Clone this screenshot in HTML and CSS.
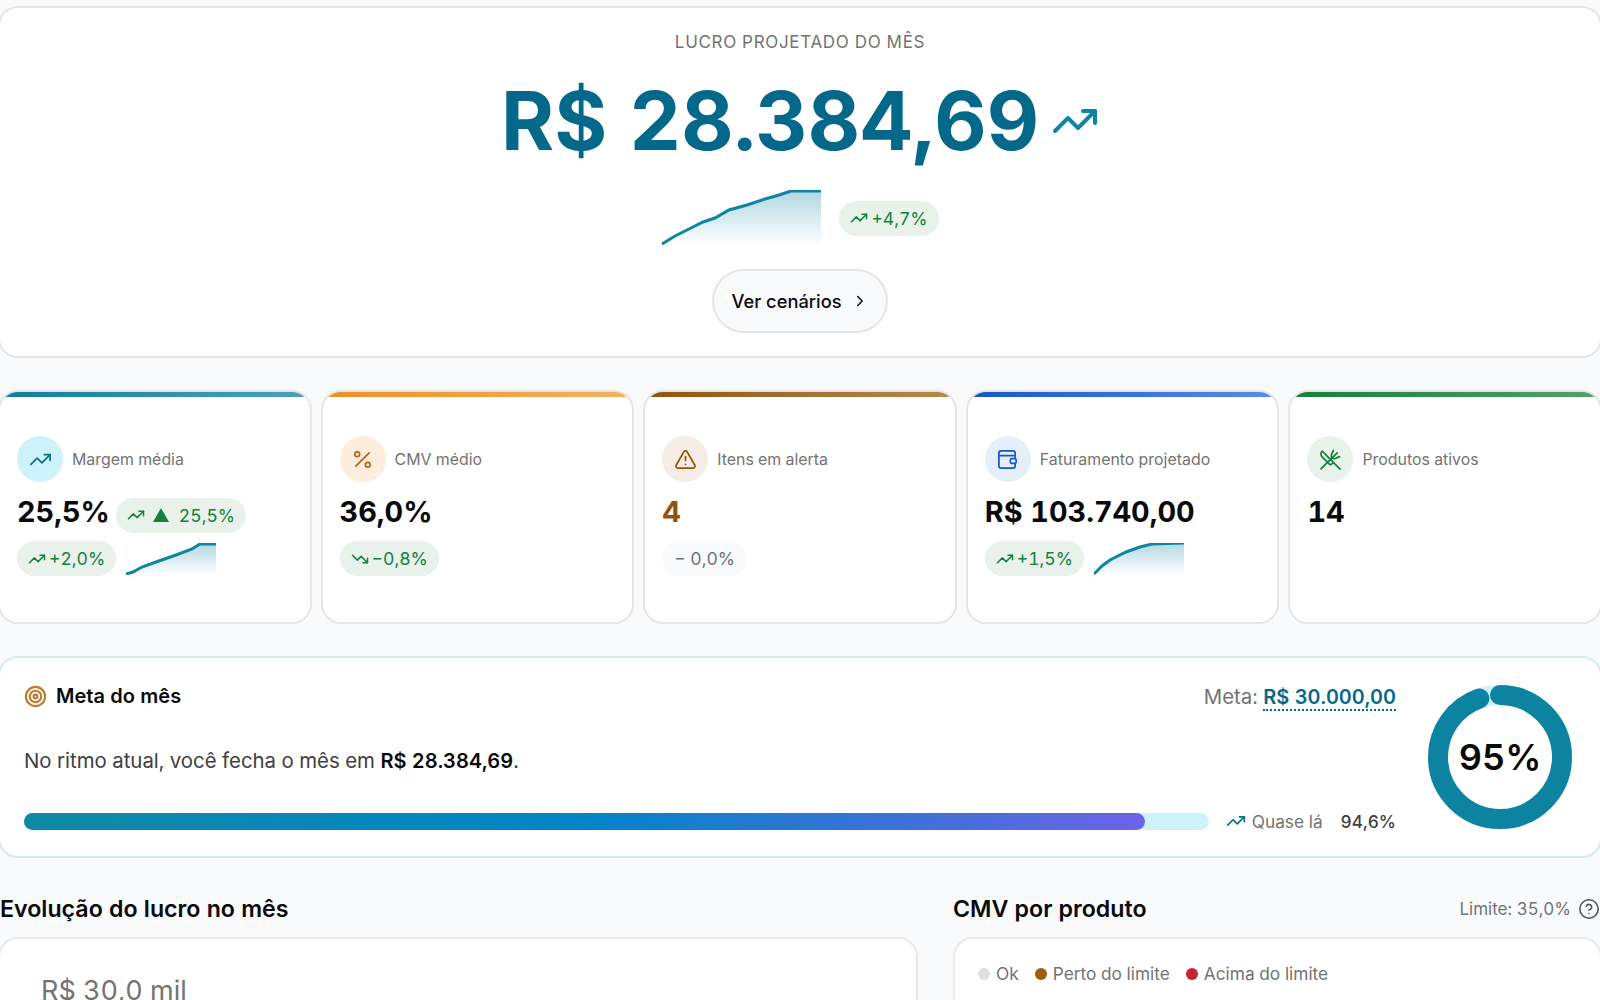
FILE: index.html
```html
<!doctype html>
<html lang="pt-BR">
<head>
    <meta charset="utf-8">
    <title>Lucro projetado</title>
    <link rel="stylesheet" href="styles.css">
</head>
<body>
<svg class="defs" width="0" height="0">
    <defs>
        <symbol id="i-up" viewBox="0 0 24 24"><polyline points="22 7 13.5 15.5 8.5 10.5 2 17"/><polyline points="16 7 22 7 22 13"/></symbol>
        <symbol id="i-down" viewBox="0 0 24 24"><polyline points="22 17 13.5 8.5 8.5 13.5 2 7"/><polyline points="16 17 22 17 22 11"/></symbol>
        <linearGradient id="spark-fill" x1="0" y1="0" x2="0" y2="1">
            <stop offset="0" stop-color="#0e86a3" stop-opacity=".32"/>
            <stop offset="1" stop-color="#0e86a3" stop-opacity="0"/>
        </linearGradient>
    </defs>
</svg>
<div class="page">
    <section class="hero">
        <div class="hero-label">LUCRO PROJETADO DO MÊS</div>
        <div class="hero-value">
            <span>R$ 28.384,69</span>
            <svg class="ico hero-ico"><use href="#i-up"/></svg>
        </div>
        <div class="hero-trend">
            <svg class="spark-big" viewBox="0 0 160 56">
                <path class="spark-area" d="M1 54L14 46L32 37L42 32L54 28L68 20L86 15L104 9L118 5L130 1L160 1V56H1Z"/>
                <path class="spark-line" d="M1 54L14 46L32 37L42 32L54 28L68 20L86 15L104 9L118 5L130 1L160 1"/>
            </svg>
            <span class="chip"><svg class="ico chip-ico"><use href="#i-up"/></svg>+4,7%</span>
        </div>
        <button class="btn">Ver cenários
            <svg class="ico btn-ico" viewBox="0 0 24 24"><path d="m9 18 6-6-6-6"/></svg>
        </button>
    </section>

    <section class="kpis">
        <div class="kpi kpi-teal">
            <div class="kpi-head">
                <span class="kpi-icon"><svg class="ico"><use href="#i-up"/></svg></span>
                <span class="kpi-label">Margem média</span>
            </div>
            <div class="kpi-row">
                <span class="kpi-value">25,5%</span>
                <span class="chip"><svg class="ico chip-ico"><use href="#i-up"/></svg><span class="tri"></span>25,5%</span>
            </div>
            <div class="kpi-row">
                <span class="chip"><svg class="ico chip-ico"><use href="#i-up"/></svg>+2,0%</span>
                <svg class="spark" viewBox="0 0 90 32">
                    <path class="spark-area" d="M0 31L7 29L16 24L30 19L50 12L66 6L74 1L90 1V32H0Z"/>
                    <path class="spark-line" d="M0 31L7 29L16 24L30 19L50 12L66 6L74 1L90 1"/>
                </svg>
            </div>
        </div>
        <div class="kpi kpi-orange">
            <div class="kpi-head">
                <span class="kpi-icon">
                    <svg class="ico" viewBox="0 0 24 24"><line x1="19" y1="5" x2="5" y2="19"/><circle cx="6.5" cy="6.5" r="2.5"/><circle cx="17.5" cy="17.5" r="2.5"/></svg>
                </span>
                <span class="kpi-label">CMV médio</span>
            </div>
            <div class="kpi-row">
                <span class="kpi-value">36,0%</span>
            </div>
            <div class="kpi-row">
                <span class="chip"><svg class="ico chip-ico"><use href="#i-down"/></svg>−0,8%</span>
            </div>
        </div>
        <div class="kpi kpi-brown">
            <div class="kpi-head">
                <span class="kpi-icon">
                    <svg class="ico" viewBox="0 0 24 24"><path d="m21.73 18-8-14a2 2 0 0 0-3.48 0l-8 14A2 2 0 0 0 4 21h16a2 2 0 0 0 1.73-3"/><path d="M12 9v4"/><path d="M12 17h.01"/></svg>
                </span>
                <span class="kpi-label">Itens em alerta</span>
            </div>
            <div class="kpi-row">
                <span class="kpi-value">4</span>
            </div>
            <div class="kpi-row">
                <span class="chip chip-muted">− 0,0%</span>
            </div>
        </div>
        <div class="kpi kpi-blue">
            <div class="kpi-head">
                <span class="kpi-icon">
                    <svg class="ico" viewBox="0 0 24 24"><rect x="3" y="3" width="17" height="18" rx="2.5"/><path d="M3 8h17"/><rect x="15" y="11" width="6" height="5" rx="1.5" fill="#e5eefb"/></svg>
                </span>
                <span class="kpi-label">Faturamento projetado</span>
            </div>
            <div class="kpi-row">
                <span class="kpi-value">R$ 103.740,00</span>
            </div>
            <div class="kpi-row">
                <span class="chip"><svg class="ico chip-ico"><use href="#i-up"/></svg>+1,5%</span>
                <svg class="spark" viewBox="0 0 90 32">
                    <path class="spark-area" d="M0 31L8 23L16 17L32 9L46 4L58 1L90 0V32H0Z"/>
                    <path class="spark-line" d="M0 31L8 23L16 17L32 9L46 4L58 1L90 0"/>
                </svg>
            </div>
        </div>
        <div class="kpi kpi-green">
            <div class="kpi-head">
                <span class="kpi-icon">
                    <svg class="ico" viewBox="0 0 24 24"><path d="M15 15 3.3 3.3a4.2 4.2 0 0 0 0 6l7.3 7.3c.7.7 2 .7 2.8 0L15 15Zm0 0 7 7"/><path d="m2.1 21.8 12-12"/><path d="M15 2.500 13 7a3 3 0 0 0 .8 3.200 3 3 0 0 0 3.200.8l4.500-2"/><path d="m19 5-4.800 4.800"/></svg>
                </span>
                <span class="kpi-label">Produtos ativos</span>
            </div>
            <div class="kpi-row">
                <span class="kpi-value">14</span>
            </div>
        </div>
    </section>

    <section class="goal">
        <div class="goal-main">
            <div class="goal-top">
                <div class="goal-title">
                    <svg class="ico goal-ico" viewBox="0 0 24 24"><circle cx="12" cy="12" r="10"/><circle cx="12" cy="12" r="6"/><circle cx="12" cy="12" r="2"/></svg>
                    Meta do mês
                </div>
                <div class="goal-target">Meta: <span class="goal-amount">R$ 30.000,00</span></div>
            </div>
            <p class="goal-text">No ritmo atual, você fecha o mês em <strong>R$ 28.384,69</strong>.</p>
            <div class="goal-bar-row">
                <div class="bar"><div class="bar-fill" style="width:94.6%"></div></div>
                <span class="goal-status"><svg class="ico status-ico"><use href="#i-up"/></svg>Quase lá</span>
                <span class="goal-pct">94,6%</span>
            </div>
        </div>
        <div class="donut">
            <svg viewBox="0 0 144 144">
                <circle class="donut-track" cx="72" cy="72" r="62"/>
                <circle class="donut-arc" cx="72" cy="72" r="62" pathLength="100" stroke-dasharray="94.6 5.4" transform="rotate(-90 72 72)"/>
            </svg>
            <span class="donut-text">95%</span>
        </div>
    </section>

    <section class="charts">
        <div class="chart-col">
            <div class="chart-head"><h2>Evolução do lucro no mês</h2></div>
            <div class="panel"><div class="axis-label">R$ 30,0 mil</div></div>
        </div>
        <div class="chart-col">
            <div class="chart-head">
                <h2>CMV por produto</h2>
                <span class="limit">Limite: 35,0%
                    <svg class="ico help-ico" viewBox="0 0 24 24"><circle cx="12" cy="12" r="10"/><path d="M9.09 9a3 3 0 0 1 5.83 1c0 2-3 3-3 3"/><path d="M12 17h.01"/></svg>
                </span>
            </div>
            <div class="panel panel-legend">
                <div class="legend">
                    <span class="legend-item"><i class="dot dot-ok"></i>Ok</span>
                    <span class="legend-item"><i class="dot dot-near"></i>Perto do limite</span>
                    <span class="legend-item"><i class="dot dot-over"></i>Acima do limite</span>
                </div>
            </div>
        </div>
    </section>
</div>
</body>
</html>
```

FILE: styles.css
```css
*{
    margin:0;
    padding:0;
    box-sizing:border-box;
}
html,body{
    height:1000px;
    overflow:hidden;
}
body{
    background:#f8fafc;
    color:#0a0a0a;
    font-family:Inter,"Liberation Sans",sans-serif;
    font-variant-numeric:tabular-nums;
}
.defs{
    position:absolute;
}
.page{
    margin:0 -2px;
    padding-top:6px;
}
.ico{
    display:block;
    width:24px;
    height:24px;
    fill:none;
    stroke:currentColor;
    stroke-width:2;
    stroke-linecap:round;
    stroke-linejoin:round;
}

/* hero */
.hero{
    height:352px;
    background:#fff;
    border:2px solid #e5e5e5;
    border-radius:20px;
    padding-top:22px;
    display:flex;
    flex-direction:column;
    align-items:center;
}
.hero-label{
    font-size:17px;
    line-height:24px;
    letter-spacing:.68px;
    color:#737373;
}
.hero-value{
    display:flex;
    align-items:center;
    gap:12px;
    margin-top:19px;
    font-size:81px;
    line-height:96px;
    font-weight:700;
    color:#04688a;
}
.hero-ico{
    width:48px;
    height:48px;
    color:#0e86a3;
}
.hero-trend{
    display:flex;
    align-items:center;
    gap:18px;
    margin-top:21px;
}
.spark-big{
    width:160px;
    height:56px;
    display:block;
}
.spark{
    width:90px;
    height:32px;
    display:block;
}
.spark-area{
    fill:url(#spark-fill);
}
.spark-line{
    fill:none;
    stroke:#0e86a3;
    stroke-width:3;
}
.chip{
    display:inline-flex;
    align-items:center;
    gap:3px;
    height:35px;
    padding:0 11px;
    border-radius:18px;
    background:#e8f2ea;
    color:#15803d;
    font-size:17.6px;
    font-weight:400;
    white-space:nowrap;
}
.chip-ico{
    width:18px;
    height:18px;
}
.chip-muted{
    padding:0 12px;
    background:#f8fafc;
    color:#737373;
}
.tri{
    width:0;
    height:0;
    border-left:8px solid transparent;
    border-right:8px solid transparent;
    border-bottom:14px solid #15803d;
    margin:0 7px 0 5px;
}
.btn{
    display:flex;
    align-items:center;
    gap:9px;
    margin-top:23px;
    height:64px;
    padding:0 17px;
    border:2px solid #e5e5e5;
    border-radius:32px;
    background:#f8fafc;
    color:#0a0a0a;
    font:500 18.3px Inter,"Liberation Sans",sans-serif;
}
.btn-ico{
    width:18px;
    height:18px;
}

/* kpi cards */
.kpis{
    display:grid;
    grid-template-columns:repeat(5,1fr);
    gap:9px;
    margin-top:32px;
}
.kpi{
    height:234px;
    background:#fff;
    border:2px solid #e5e5e5;
    border-radius:20px;
    padding:44px 17px 0;
    overflow:hidden;
    position:relative;
}
.kpi:before{
    content:"";
    position:absolute;
    left:-2px;
    right:-2px;
    top:-2px;
    height:7px;
}
.kpi-teal:before{background:linear-gradient(90deg,#0e7f9c,#4ea3b8);}
.kpi-orange:before{background:linear-gradient(90deg,#ee8f22,#f6b25f);}
.kpi-brown:before{background:linear-gradient(90deg,#92540c,#b78a50);}
.kpi-blue:before{background:linear-gradient(90deg,#1558cc,#5a8ee6);}
.kpi-green:before{background:linear-gradient(90deg,#15803d,#55a070);}
.kpi-head{
    display:flex;
    align-items:center;
    gap:9px;
}
.kpi-icon{
    width:46px;
    height:46px;
    border-radius:50%;
    display:flex;
    align-items:center;
    justify-content:center;
}
.kpi-icon .ico{
    width:23px;
    height:23px;
    stroke-width:1.8;
}
.kpi-teal .kpi-icon{background:#cdf2fb;color:#0b6f8c;}
.kpi-orange .kpi-icon{background:#fdeddc;color:#b8651b;}
.kpi-brown .kpi-icon{background:#f5ede5;color:#92540c;}
.kpi-blue .kpi-icon{background:#e5eefb;color:#1558cc;}
.kpi-green .kpi-icon{background:#e8f2ea;color:#15803d;}
.kpi-label{
    font-size:15.9px;
    color:#737373;
}
.kpi-row{
    display:flex;
    align-items:center;
    gap:6px;
    height:35px;
    margin-top:11px;
}
.kpi-head + .kpi-row{
    margin-top:12px;
    height:36px;
}
.kpi-value{
    font-size:28.8px;
    line-height:36px;
    font-weight:700;
}
.kpi-value + .chip{
    margin-top:6px;
}
.kpi-row .chip + .spark{
    margin-left:4px;
}
.kpi-brown .kpi-value{
    color:#92540c;
}

/* meta */
.goal{
    display:flex;
    align-items:center;
    gap:32px;
    height:202px;
    margin-top:32px;
    padding:0 28px 0 24px;
    background:#fff;
    border:2px solid #d6e9ee;
    border-radius:20px;
}
.goal-main{
    flex:1;
    padding-top:1px;
}
.goal-top{
    display:flex;
    justify-content:space-between;
    align-items:center;
}
.goal-title{
    display:flex;
    align-items:center;
    gap:9px;
    font-size:20px;
    font-weight:600;
}
.goal-ico{
    width:23px;
    height:23px;
    color:#bf7a2c;
    stroke-width:2.2;
}
.goal-target{
    font-size:20.4px;
    color:#737373;
}
.goal-amount{
    font-size:20px;
    color:#04688a;
    font-weight:600;
    border-bottom:2px dotted #04688a;
}
.goal-text{
    margin-top:38px;
    font-size:20.4px;
    line-height:28px;
    color:#404040;
}
.goal-text strong{
    font-size:20px;
    color:#0a0a0a;
    font-weight:600;
}
.goal-bar-row{
    display:flex;
    align-items:center;
    margin-top:36px;
    font-size:17.3px;
}
.bar{
    flex:1;
    height:17px;
    border-radius:9px;
    background:#cdf2fb;
}
.bar-fill{
    height:100%;
    border-radius:9px;
    background:linear-gradient(90deg,#0e8aa6,#0284c7 50%,#6b63e8);
}
.goal-status{
    display:flex;
    align-items:center;
    gap:6px;
    margin-left:17px;
    color:#737373;
}
.status-ico{
    width:20px;
    height:20px;
    color:#0b6f8c;
}
.goal-pct{
    margin-left:18px;
    color:#404040;
    font-weight:500;
}
.donut{
    position:relative;
    flex:none;
    width:144px;
    height:144px;
}
.donut svg{
    display:block;
}
.donut-track{
    fill:none;
    stroke:#cdf2fb;
    stroke-width:20;
}
.donut-arc{
    fill:none;
    stroke:#0c83a0;
    stroke-width:20;
    stroke-linecap:round;
}
.donut-text{
    position:absolute;
    inset:0;
    display:flex;
    align-items:center;
    justify-content:center;
    font-size:36px;
    font-weight:600;
}

/* charts */
.charts{
    display:grid;
    grid-template-columns:920px 1fr;
    gap:35px;
    margin-top:35px;
}
.chart-head{
    display:flex;
    justify-content:space-between;
    align-items:center;
    height:32px;
    padding:0 2px;
}
.chart-col + .chart-col .chart-head{
    padding-left:0;
}
.chart-head h2{
    font-size:23.2px;
    font-weight:600;
}
.limit{
    display:flex;
    align-items:center;
    gap:7px;
    font-size:17px;
    color:#737373;
}
.help-ico{
    width:22px;
    height:22px;
    stroke-width:1.7;
    color:#525252;
}
.panel{
    height:200px;
    margin-top:12px;
    background:#fff;
    border:2px solid #e9e9e9;
    border-radius:20px;
    padding:36px 41px;
}
.panel-legend{
    padding:24px 23px;
}
.axis-label{
    font-size:27px;
    line-height:32px;
    color:#737373;
}
.legend{
    display:flex;
    gap:16px;
    font-size:17.3px;
    color:#737373;
}
.legend-item{
    display:flex;
    align-items:center;
    gap:6px;
}
.dot{
    width:12px;
    height:12px;
    border-radius:50%;
}
.dot-ok{background:#e0e0e0;}
.dot-near{background:#a35c0c;}
.dot-over{background:#c8222f;}
```
